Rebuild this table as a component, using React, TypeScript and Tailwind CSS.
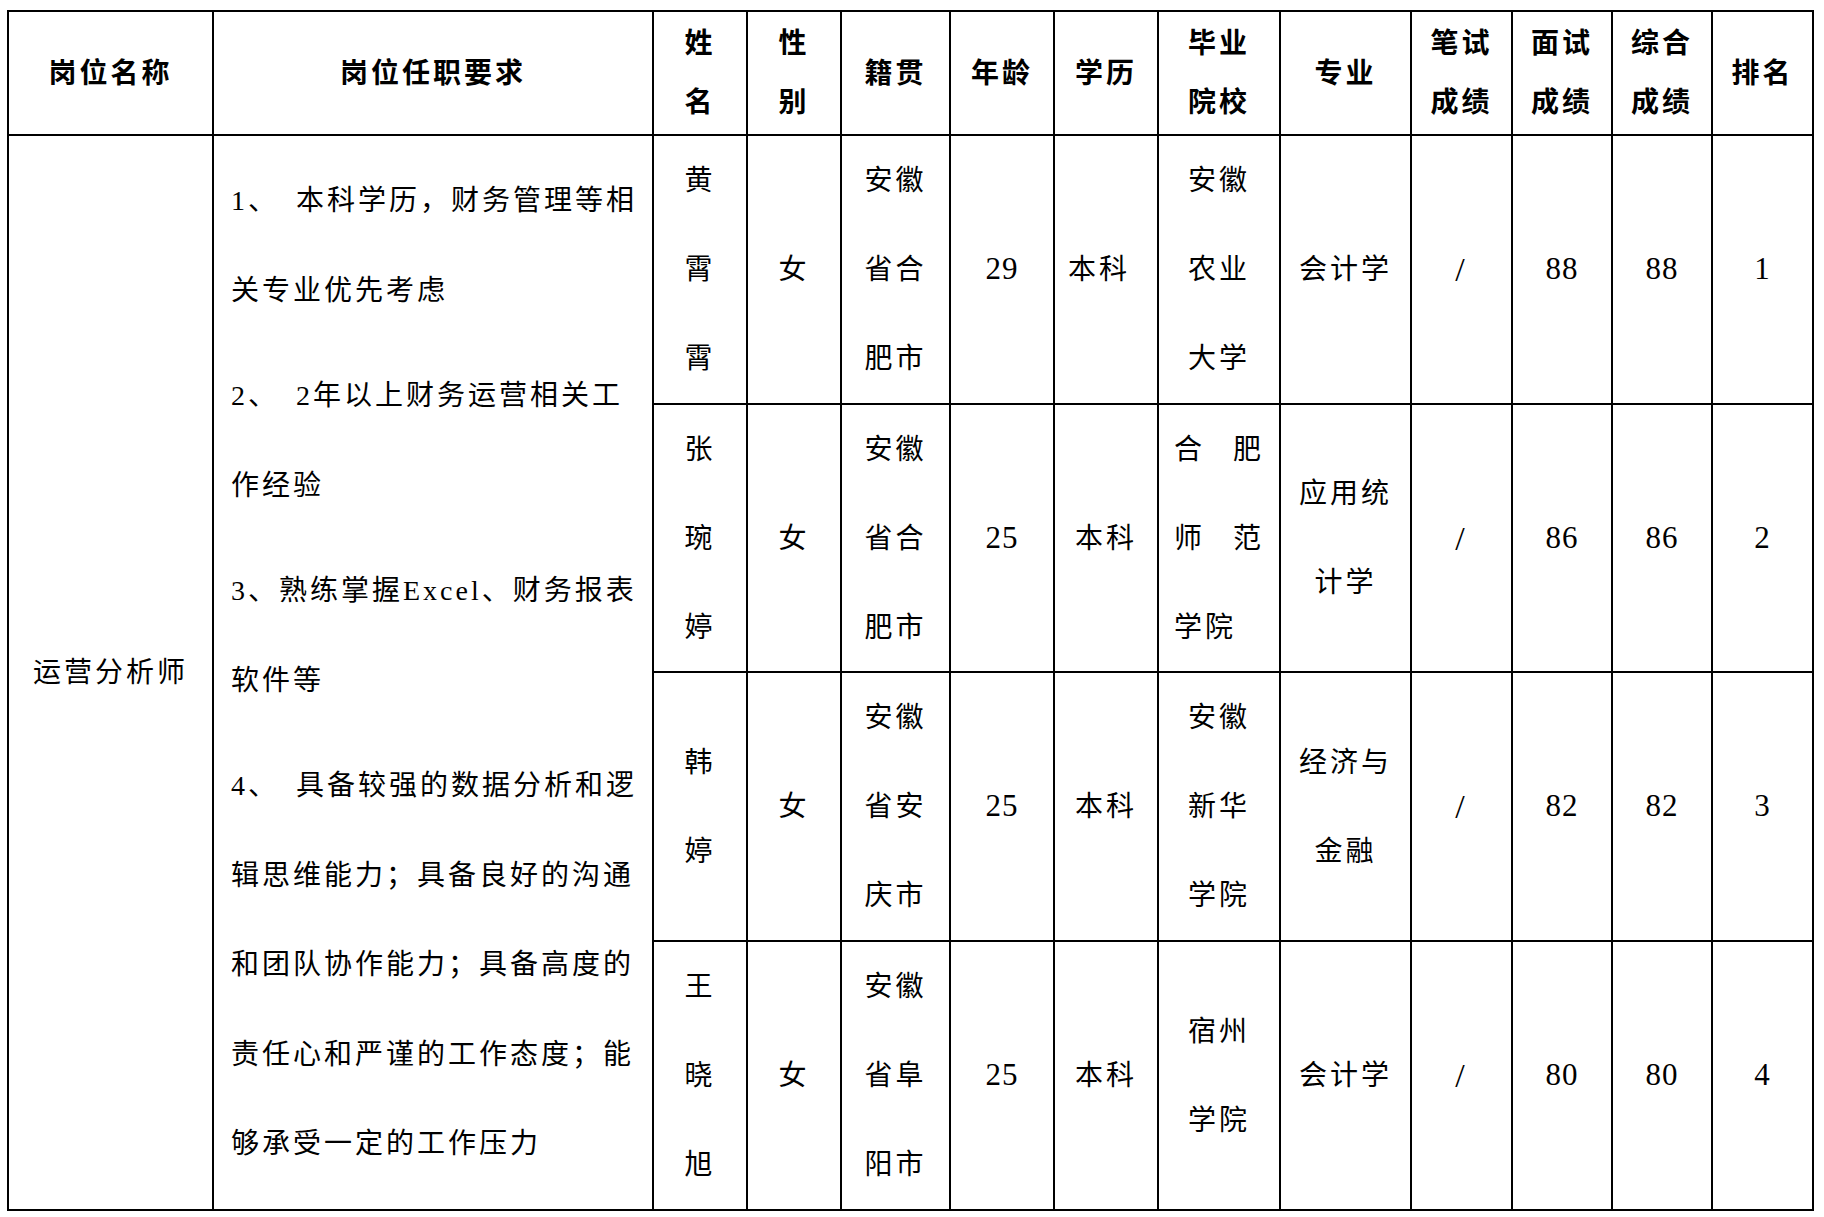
// 招聘岗位成绩公示表 — 运营分析师
// 左两列跨四行，其余每人一行；文字按原表手工断行

type Row = {
  name: string[]
  gender: string
  origin: string[]
  age: string
  edu: string
  eduClass?: string
  school: string[] | 'justify'
  major: string[]
  written: string
  interview: string
  total: string
  rank: string
}

const ROWS: Row[] = [
  {
    name: ['黄', '霄', '霄'],
    gender: '女',
    origin: ['安徽', '省合', '肥市'],
    age: '29',
    edu: '本科',
    eduClass: 'pr-[14px]',
    school: ['安徽', '农业', '大学'],
    major: ['会计学'],
    written: '/',
    interview: '88',
    total: '88',
    rank: '1',
  },
  {
    name: ['张', '琬', '婷'],
    gender: '女',
    origin: ['安徽', '省合', '肥市'],
    age: '25',
    edu: '本科',
    school: 'justify',
    major: ['应用统', '计学'],
    written: '/',
    interview: '86',
    total: '86',
    rank: '2',
  },
  {
    name: ['韩', '婷'],
    gender: '女',
    origin: ['安徽', '省安', '庆市'],
    age: '25',
    edu: '本科',
    school: ['安徽', '新华', '学院'],
    major: ['经济与', '金融'],
    written: '/',
    interview: '82',
    total: '82',
    rank: '3',
  },
  {
    name: ['王', '晓', '旭'],
    gender: '女',
    origin: ['安徽', '省阜', '阳市'],
    age: '25',
    edu: '本科',
    school: ['宿州', '学院'],
    major: ['会计学'],
    written: '/',
    interview: '80',
    total: '80',
    rank: '4',
  },
]

const HEAD: string[][] = [
  ['岗位名称'],
  ['岗位任职要求'],
  ['姓', '名'],
  ['性', '别'],
  ['籍贯'],
  ['年龄'],
  ['学历'],
  ['毕业', '院校'],
  ['专业'],
  ['笔试', '成绩'],
  ['面试', '成绩'],
  ['综合', '成绩'],
  ['排名'],
]

const REQS: string[][] = [
  ['1、\u2002本科学历，财务管理等相', '关专业优先考虑'],
  ['2、\u20022年以上财务运营相关工', '作经验'],
  ['3、熟练掌握Excel、财务报表', '软件等'],
  [
    '4、\u2002具备较强的数据分析和逻',
    '辑思维能力；具备良好的沟通',
    '和团队协作能力；具备高度的',
    '责任心和严谨的工作态度；能',
    '够承受一定的工作压力',
  ],
]

function Lines({ lines, className = '' }: { lines: string[]; className?: string }) {
  return (
    <div className={`h-full flex flex-col items-center justify-center bg-white ${className}`}>
      {lines.map((l, i) => (
        <div key={i} className="leading-[89px] whitespace-nowrap">
          {l}
        </div>
      ))}
    </div>
  )
}

// 数字列：字号稍大、字距收紧
function Num({ value }: { value: string }) {
  return (
    <div className="h-full flex items-center justify-center bg-white text-[31px] tracking-[1px]">
      {value}
    </div>
  )
}

export default function App() {
  return (
    <div
      className="min-h-screen w-full bg-white text-black text-[28px] tracking-[3px]"
      style={{ fontFamily: '"Liberation Serif", "Noto Sans CJK SC", serif' }}
    >
      <div className="pl-[7px] pt-[10px]">
        <div className="inline-grid bg-black p-[2px] gap-[2px] grid-cols-[203px_438px_92px_92px_107px_102px_102px_120px_129px_99px_98px_98px_99px] grid-rows-[122px_267px_266px_267px_267px]">
          {/* header */}
          {HEAD.map((h, i) => (
            <div key={i} className="bg-white flex flex-col items-center justify-center font-bold">
              {h.map((l, j) => (
                <div key={j} className="leading-[59px] whitespace-nowrap">
                  {l}
                </div>
              ))}
            </div>
          ))}

          {/* 岗位名称 */}
          <div className="row-span-4 bg-white flex items-center justify-center">运营分析师</div>

          {/* 岗位任职要求 */}
          <div className="row-span-4 bg-white flex flex-col justify-center gap-[16px] pl-[17px]">
            {REQS.map((p, i) => (
              <div key={i}>
                {p.map((l, j) => (
                  <div key={j} className="leading-[89.5px] whitespace-pre">
                    {l}
                  </div>
                ))}
              </div>
            ))}
          </div>

          {ROWS.map((r, i) => (
            <div key={i} className="contents">
              <Lines lines={r.name} />
              <Lines lines={[r.gender]} />
              <Lines lines={r.origin} />
              <Num value={r.age} />
              <Lines lines={[r.edu]} className={r.eduClass} />
              {r.school === 'justify' ? (
                <div className="h-full flex items-center justify-center bg-white">
                  <div className="w-[90px]">
                    <div className="leading-[89px] flex justify-between">
                      <span>合</span>
                      <span>肥</span>
                    </div>
                    <div className="leading-[89px] flex justify-between">
                      <span>师</span>
                      <span>范</span>
                    </div>
                    <div className="leading-[89px]">学院</div>
                  </div>
                </div>
              ) : (
                <Lines lines={r.school} />
              )}
              <Lines lines={r.major} />
              <div className="h-full flex items-center justify-center bg-white text-[34px] font-light">
                {r.written}
              </div>
              <Num value={r.interview} />
              <Num value={r.total} />
              <Num value={r.rank} />
            </div>
          ))}
        </div>
      </div>
    </div>
  )
}
